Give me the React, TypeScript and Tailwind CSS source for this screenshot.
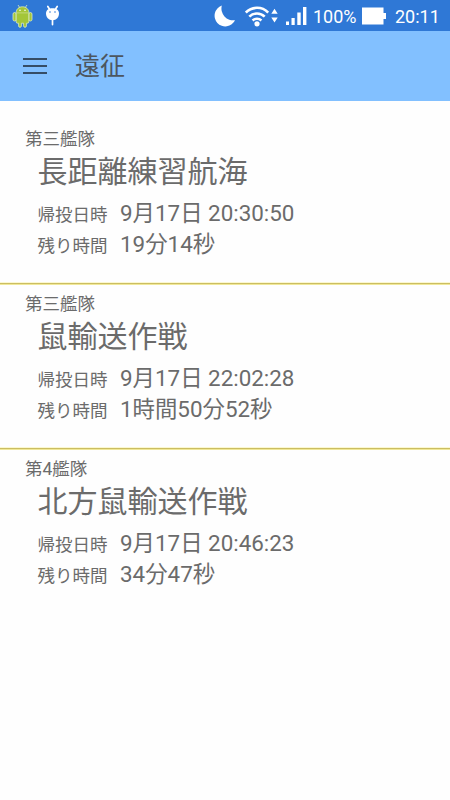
import React from 'react';

interface Expedition {
  fleet: string;
  name: string;
  returnAt: string;
  remaining: string;
}

const expeditions: Expedition[] = [
  { fleet: '第三艦隊', name: '長距離練習航海', returnAt: '9月17日 20:30:50', remaining: '19分14秒' },
  { fleet: '第三艦隊', name: '鼠輸送作戦', returnAt: '9月17日 22:02:28', remaining: '1時間50分52秒' },
  { fleet: '第4艦隊', name: '北方鼠輸送作戦', returnAt: '9月17日 20:46:23', remaining: '34分47秒' },
];

const StatusBar: React.FC = () => (
  <div className="flex h-[31px] items-center bg-[#2f78d6] text-white">
    <svg className="ml-3 h-6 w-[21px] shrink-0" viewBox="0 0 21 24">
      <g fill="#a4c639" stroke="#dcecc0" strokeWidth=".8">
        <path d="M6 1l1.800 2.600M15 1l-1.800 2.600" />
        <rect x="1" y="8.500" width="3.200" height="8.500" rx="1.600" />
        <rect x="16.800" y="8.500" width="3.200" height="8.500" rx="1.600" />
        <path d="M4.200 8.800C4.200 5 6.900 2.800 10.500 2.800S16.800 5 16.800 8.800v9a1.400 1.400 0 0 1-1.400 1.400h-1v2.700a1.400 1.400 0 0 1-2.800 0v-2.700H9.400v2.700a1.400 1.400 0 0 1-2.800 0v-2.700h-1a1.400 1.400 0 0 1-1.400-1.400z" />
      </g>
      <path d="M4.600 8.900h11.800" stroke="#c9de8c" strokeWidth=".8" />
      <circle cx="8" cy="6.300" r=".8" fill="#fff" />
      <circle cx="13" cy="6.300" r=".8" fill="#fff" />
    </svg>
    <svg className="ml-3 h-[21px] w-[15px] shrink-0" viewBox="0 0 15 21">
      <path d="M2.800 1.500l1.600 2.500M12.200 1.500l-1.600 2.500M7.500 14v5.600" stroke="#fff" strokeWidth="1.700" strokeLinecap="round" />
      <path d="M1 8.500C1 5 3.800 3.200 7.500 3.200S14 5 14 8.500s-2.500 6.700-6.500 6.700S1 12 1 8.500z" fill="#fff" />
      <circle cx="5" cy="7" r=".8" fill="#2f78d6" />
      <circle cx="10" cy="7" r=".8" fill="#2f78d6" />
    </svg>
    <svg className="ml-[154px] h-[22px] w-[22px] shrink-0" viewBox="0 0 22 22">
      <path d="M7.800.6A10.700 10.700 0 1 0 21 15.200 11.800 11.800 0 0 1 7.800.6z" fill="#fff" />
    </svg>
    <svg className="ml-[9px] h-[22px] w-[34px] shrink-0" viewBox="0 0 34 22">
      <g fill="none" stroke="#fff" strokeWidth="2.600">
        <path d="M.8 7.600a15.500 15.500 0 0 1 22.400 0" />
        <path d="M4.300 11.700a10.800 10.800 0 0 1 15.400 0" />
        <path d="M7.600 15.500a6.300 6.300 0 0 1 8.800 0" />
      </g>
      <circle cx="12" cy="18.800" r="2.600" fill="#fff" />
      <path d="M26.300 8.800h6.400l-3.200-5zM26.300 12.500h6.400l-3.200 5z" fill="#fff" />
    </svg>
    <svg className="ml-[7px] h-[19px] w-[21px] shrink-0" viewBox="0 0 21 19">
      <path d="M0 15.500h3V19H0zM5.500 12h3.200v7H5.500zM11.300 6.500h3.400V19h-3.400zM17 1h3.400v18H17z" fill="#fff" />
    </svg>
    <span className="ml-[6px] w-[43px] pt-[2px] text-[18px] leading-6 whitespace-nowrap">100%</span>
    <svg className="ml-[6px] h-[18px] w-6 shrink-0" viewBox="0 0 24 18">
      <path d="M0 .5h21.500v5.500H24v6h-2.500v5.500H0z" fill="#fff" />
    </svg>
    <span className="ml-[9px] pt-[2px] text-[18px] leading-6 whitespace-nowrap">20:11</span>
  </div>
);

const Toolbar: React.FC = () => (
  <header className="flex h-[70px] items-center bg-[#82c0ff] text-[#4c565f]">
    <button type="button" className="ml-[23px] flex w-6 flex-col gap-[5px]" aria-label="menu">
      <span className="h-[2px] w-full bg-[#354d66]" />
      <span className="h-[2px] w-full bg-[#354d66]" />
      <span className="h-[2px] w-full bg-[#354d66]" />
    </button>
    <h1 className="ml-7 pt-[2px] text-[25px] leading-9">遠征</h1>
  </header>
);

const ExpeditionRow: React.FC<{ item: Expedition }> = ({ item }) => (
  <li className="h-[165px] border-b border-[#cbbd62] pt-[10px] shadow-[0_1px_0_#f0e898,inset_0_-1px_0_#fbf8d0] last:border-b-0 last:shadow-none">
    <div className="pl-[25px] text-[17.5px] leading-5">{item.fleet}</div>
    <div className="mt-1 pl-[37.5px] text-[30px] leading-[38px]">{item.name}</div>
    <dl className="mt-[7px] grid auto-rows-[30.5px] grid-cols-[82.5px_1fr] items-baseline pl-[37.5px]">
      <dt className="text-[17.5px] leading-[30px]">帰投日時</dt>
      <dd className="text-[22.4px] leading-[30px]">{item.returnAt}</dd>
      <dt className="text-[17.5px] leading-[30px]">残り時間</dt>
      <dd className="text-[22.4px] leading-[30px]">{item.remaining}</dd>
    </dl>
  </li>
);

export default function App() {
  return (
    <div className="h-[800px] w-[450px] overflow-hidden bg-[#fefefe] font-['Roboto','Noto_Sans_CJK_JP',sans-serif]" lang="ja">
      <StatusBar />
      <Toolbar />
      <ul className="pt-[18px] text-[#6b6b6b]">
        {expeditions.map((item) => (
          <ExpeditionRow key={item.name} item={item} />
        ))}
      </ul>
    </div>
  );
}
